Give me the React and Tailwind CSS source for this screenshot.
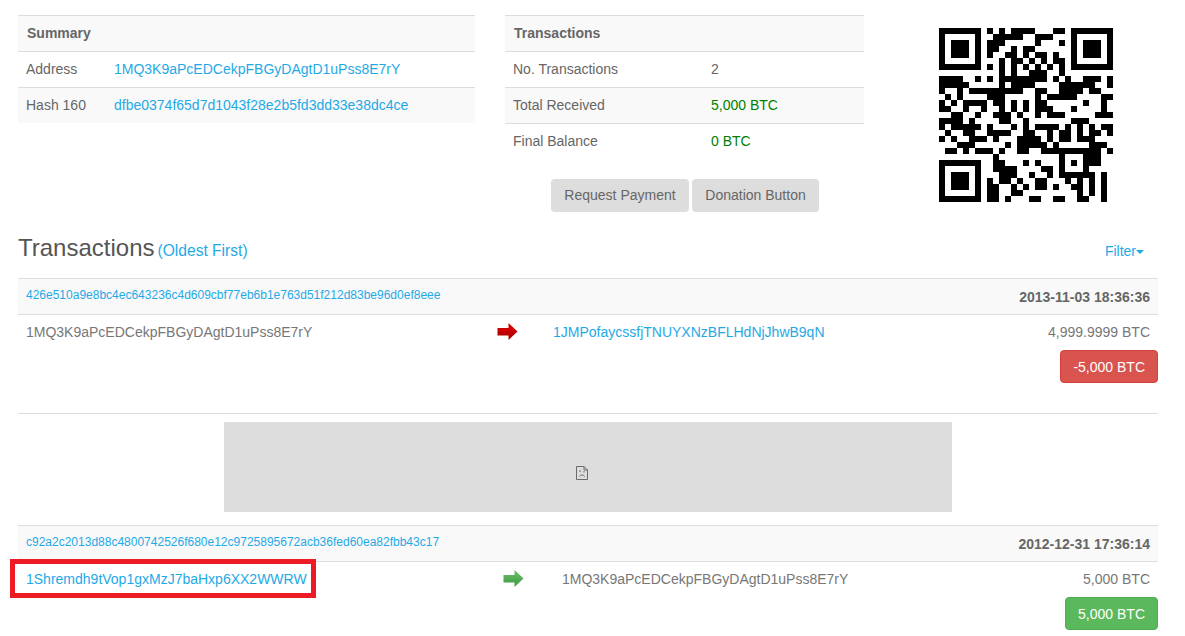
const F0 = '1111111';
const F1 = '1000001';
const F2 = '1011101';
const E = '0000000';

const QR_ROWS = [
  F0 + '0' + '1010111100011' + '0' + F0,
  F1 + '0' + '0111110011100' + '0' + F1,
  F2 + '0' + '1110000010001' + '0' + F2,
  F2 + '0' + '1100101100000' + '0' + F2,
  F2 + '0' + '1001101011010' + '0' + F2,
  F1 + '0' + '0010110101011' + '0' + F1,
  F0 + '0' + '1010101010101' + '0' + F0,
  E + '0' + '0010100111001' + '0' + E,
  '111100101011111' + '11101010011101',
  '11111000001011' + '110000111111001',
  '10010111111111' + '001100111101100',
  '01010000111000' + '001011111000011',
  '10101111011010' + '101100000010010',
  '11001001001010' + '101110001000010',
  '00110010011101' + '001011100000111',
  '11110100001100' + '100000001110000',
  '10111110100010' + '101111010101011',
  '01001100111100' + '110010110101101',
  '10100111010001' + '111010110111000',
  '00011100000101' + '111101000001110',
  '01101011' + '101001100111111111101',
  '00000000' + '010000000000100011100',
  F0 + '0' + '011000101000101011100',
  F1 + '0' + '011110000110100010000',
  F2 + '0' + '001110010010111111010',
  F2 + '0' + '101101001100010101010',
  F2 + '0' + '110010101101001101010',
  F1 + '0' + '110011000000000101010',
  F0 + '0' + '110100011001100110010',
];

const QrCode = () => (
  <svg width="174" height="174" viewBox="0 0 29 29" shapeRendering="crispEdges" className="block">
    {QR_ROWS.map((row, y) =>
      row.split('').map((cell, x) => (cell === '1' ? <rect key={`${x}-${y}`} x={x} y={y} width="1" height="1" fill="#000" /> : null))
    )}
  </svg>
);

const Arrow = ({ id, from, to }) => (
  <svg width="21" height="17" viewBox="0 0 21 17" className="block">
    <defs>
      <linearGradient id={id} x1="0" y1="0" x2="0" y2="1">
        <stop offset="0" stopColor={from} />
        <stop offset="1" stopColor={to} />
      </linearGradient>
    </defs>
    <path d="M0.5 5H11.5V0L20.5 8.5L11.5 17V12.5H0.5Z" fill={`url(#${id})`} />
  </svg>
);

const BrokenImage = () => (
  <svg width="12" height="14" viewBox="0 0 12 14" className="block" fill="none" stroke="#6b6b6b">
    <path d="M0.5 0.5H8L11.5 4V13.5H0.5Z" />
    <path d="M8 0.5V4H11.5" />
    <path d="M3.5 10.5C4 8.5 8 8.5 8.5 10.5" />
    <path d="M4 4V6M8 5V6.5" strokeWidth="1" />
  </svg>
);

const Link = ({ className = '', children }) => (
  <a href="#" className={`text-[#1fa9e6] ${className}`}>{children}</a>
);

const InfoRow = ({ label, labelWidth, striped, children }) => (
  <div className={`flex h-9 items-center border-t border-[#ddd] px-2 pb-[2px] ${striped ? 'bg-[#f9f9f9]' : ''}`}>
    <div className={labelWidth}>{label}</div>
    <div>{children}</div>
  </div>
);

const TxHeader = ({ hash, time }) => (
  <div className="flex h-[37px] items-center justify-between border-y border-[#ddd] bg-[#f9f9f9] px-2">
    <Link className="mb-[3px] text-xs">{hash}</Link>
    <span className="font-bold">{time}</span>
  </div>
);

export default function App() {
  return (
    <div className="min-h-[636px] bg-white pl-[18px] pr-[27px] pt-[15px] font-['Liberation_Sans',Arial,sans-serif] text-sm text-[#666]">
      <div className="flex h-[197px]">
        <div className="w-[457px]">
          <div className="flex h-9 items-center border-t border-[#ddd] bg-[#f9f9f9] pb-[2px] pl-[9px] font-bold">Summary</div>
          <InfoRow label="Address" labelWidth="w-[88px]">
            <Link>1MQ3K9aPcEDCekpFBGyDAgtD1uPss8E7rY</Link>
          </InfoRow>
          <InfoRow label="Hash 160" labelWidth="w-[88px]" striped>
            <Link>dfbe0374f65d7d1043f28e2b5fd3dd33e38dc4ce</Link>
          </InfoRow>
        </div>

        <div className="ml-[30px] w-[359px]">
          <div className="flex h-9 items-center border-t border-[#ddd] bg-[#f9f9f9] pb-[2px] pl-[9px] font-bold">Transactions</div>
          <InfoRow label="No. Transactions" labelWidth="w-[198px]">2</InfoRow>
          <InfoRow label="Total Received" labelWidth="w-[198px]" striped>
            <span className="text-[#008000]">5,000 BTC</span>
          </InfoRow>
          <InfoRow label="Final Balance" labelWidth="w-[198px]">
            <span className="text-[#008000]">0 BTC</span>
          </InfoRow>
          <div className="ml-[46px] mt-5 flex gap-[3px]">
            <button className="h-[33px] w-[138px] rounded bg-[#ddd] pb-[2px] text-[#666]">Request Payment</button>
            <button className="h-[33px] w-[127px] rounded bg-[#ddd] pb-[2px] text-[#666]">Donation Button</button>
          </div>
        </div>

        <div className="ml-[75px] mt-[13px]">
          <QrCode />
        </div>
      </div>

      <div className="mt-[23px] flex h-[43px] items-start justify-between">
        <h2 className="text-2xl leading-[26px] text-[#555]">
          Transactions<Link className="ml-[3px] text-[15.6px]">(Oldest First)</Link>
        </h2>
        <Link className="mr-[14px] mt-[6px] flex items-center">
          Filter
          <span className="mt-[2px] h-0 w-0 border-x-4 border-t-4 border-x-transparent border-t-[#1fa9e6]" />
        </Link>
      </div>

      <div className="h-[136px] border-b border-[#ddd]">
        <TxHeader hash="426e510a9e8bc4ec643236c4d609cbf77eb6b1e763d51f212d83be96d0ef8eee" time="2013-11-03 18:36:36" />
        <div className="flex items-start px-2 pt-[7px] text-[#777]">
          <div className="w-[471px] leading-5">1MQ3K9aPcEDCekpFBGyDAgtD1uPss8E7rY</div>
          <div className="w-[56px] pt-[1px]"><Arrow id="red-arrow" from="#e60000" to="#a50000" /></div>
          <Link className="leading-5">1JMPofaycssfjTNUYXNzBFLHdNjJhwB9qN</Link>
          <div className="flex-1 text-right leading-5">4,999.9999 BTC</div>
        </div>
        <div className="mt-[8px] flex justify-end">
          <span className="flex h-[33px] items-center rounded border border-[#d43f3a] bg-[#d9534f] px-3 text-white">-5,000 BTC</span>
        </div>
      </div>

      <div className="mt-2 flex justify-center pr-[1px]">
        <div className="flex h-[90px] w-[728px] items-center justify-center bg-[#ddd] pr-[12px] pt-[12px]">
          <BrokenImage />
        </div>
      </div>

      <div className="mt-[13px]">
        <TxHeader hash="c92a2c2013d88c4800742526f680e12c9725895672acb36fed60ea82fbb43c17" time="2012-12-31 17:36:14" />
        <div className="relative flex items-start px-2 pt-[7px] text-[#777]">
          <span className="absolute left-[-8px] top-[-3px] h-[39px] w-[306px] border-[5px] border-[#ed1c24]" />
          <Link className="w-[477px] leading-5">1Shremdh9tVop1gxMzJ7baHxp6XX2WWRW</Link>
          <div className="w-[59px] pt-[1px]"><Arrow id="green-arrow" from="#6cc06c" to="#3e9a3e" /></div>
          <div className="leading-5">1MQ3K9aPcEDCekpFBGyDAgtD1uPss8E7rY</div>
          <div className="flex-1 text-right leading-5">5,000 BTC</div>
        </div>
        <div className="mt-[8px] flex justify-end">
          <span className="flex h-[33px] items-center rounded border border-[#4cae4c] bg-[#5cb85c] px-3 text-white">5,000 BTC</span>
        </div>
      </div>
    </div>
  );
}
